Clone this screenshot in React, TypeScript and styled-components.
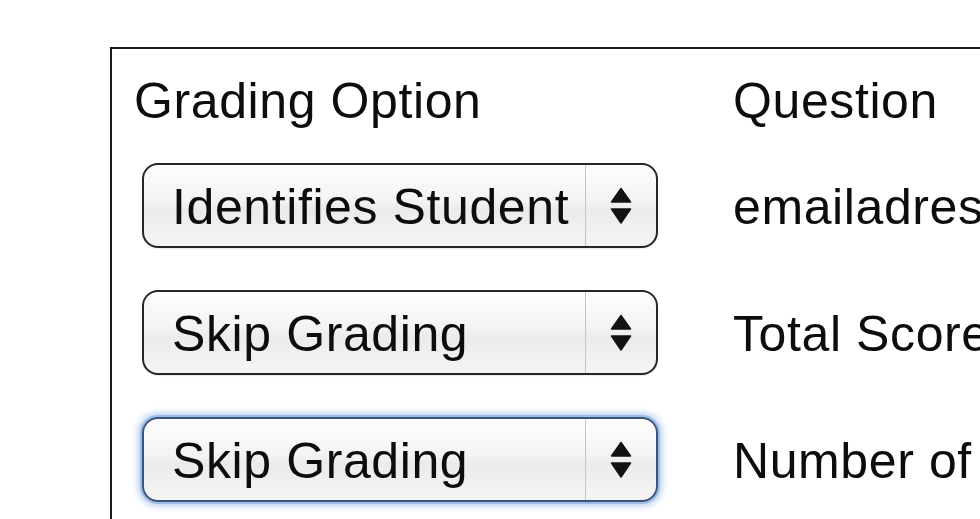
import React from 'react';
import styled, { createGlobalStyle } from 'styled-components';

const GlobalStyle = createGlobalStyle`
  html, body {
    margin: 0;
    padding: 0;
    background: #ffffff;
    overflow: hidden;
  }
  body {
    font-family: "Liberation Sans", Arial, sans-serif;
    color: #0d0d0d;
  }
`;

const Page = styled.div`
  padding: 47px 0 0 110px;
  height: 519px;
  box-sizing: border-box;
`;

const Panel = styled.div`
  width: 1100px;
  height: 600px;
  border: 2px solid #1a1a1a;
  padding: 23px 0 0 22px;
  box-sizing: border-box;
`;

const Grid = styled.div`
  display: grid;
  grid-template-columns: 599px 1fr;
  grid-template-rows: 70px repeat(3, 127px);
  align-items: center;
`;

const HeadCell = styled.div`
  align-self: start;
  font-size: 50px;
  line-height: 58px;
  letter-spacing: 0.6px;
  white-space: nowrap;
`;

const TextCell = styled.div`
  font-size: 50px;
  line-height: 58px;
  letter-spacing: 0.6px;
  white-space: nowrap;
  padding-top: 2px;
`;

const SelectBox = styled.div<{ $focused?: boolean }>`
  margin-left: 8px;
  width: 516px;
  height: 85px;
  box-sizing: border-box;
  display: flex;
  align-items: stretch;
  border: 2px solid ${(p) => (p.$focused ? '#3a5478' : '#262626')};
  border-radius: 16px;
  background: linear-gradient(#fdfdfd 0%, #f3f3f3 45%, #ebebeb 55%, #f5f5f5 100%);
  box-shadow: ${(p) =>
    p.$focused
      ? '0 0 0 2px #9dbde6, 0 0 7px 4px #b4cdee, inset 0 1px 1px rgba(255,255,255,0.9)'
      : 'inset 0 1px 1px rgba(255,255,255,0.9), 0 1px 1px rgba(0,0,0,0.08)'};
`;

const SelectLabel = styled.div`
  flex: 1;
  display: flex;
  align-items: center;
  padding-left: 28px;
  padding-top: 2px;
  font-size: 50px;
  line-height: 1;
  letter-spacing: 0.6px;
  white-space: nowrap;
  overflow: hidden;
`;

const ArrowPart = styled.div`
  width: 70px;
  border-left: 1px solid #c4c4c4;
  display: flex;
  align-items: center;
  justify-content: center;
`;

const Arrows = () => (
  <svg width="22" height="38" viewBox="0 0 22 38">
    <path d="M11 1.5 L20.5 15 L1.5 15 Z" fill="#121212" stroke="#121212" strokeWidth="1.5" strokeLinejoin="round" />
    <path d="M1.5 22 L20.5 22 L11 36 Z" fill="#121212" stroke="#121212" strokeWidth="1.5" strokeLinejoin="round" />
  </svg>
);

const Select: React.FC<{ label: string; focused?: boolean }> = ({ label, focused }) => (
  <SelectBox $focused={focused}>
    <SelectLabel>{label}</SelectLabel>
    <ArrowPart>
      <Arrows />
    </ArrowPart>
  </SelectBox>
);

const rows = [
  { option: 'Identifies Student', question: 'emailadres' },
  { option: 'Skip Grading', question: 'Total Score' },
  { option: 'Skip Grading', question: 'Number of', focused: true },
];

export default function App() {
  return (
    <Page>
      <GlobalStyle />
      <Panel>
        <Grid>
          <HeadCell>Grading Option</HeadCell>
          <HeadCell>Question</HeadCell>
          {rows.map((r, i) => (
            <React.Fragment key={i}>
              <Select label={r.option} focused={r.focused} />
              <TextCell>{r.question}</TextCell>
            </React.Fragment>
          ))}
        </Grid>
      </Panel>
    </Page>
  );
}
